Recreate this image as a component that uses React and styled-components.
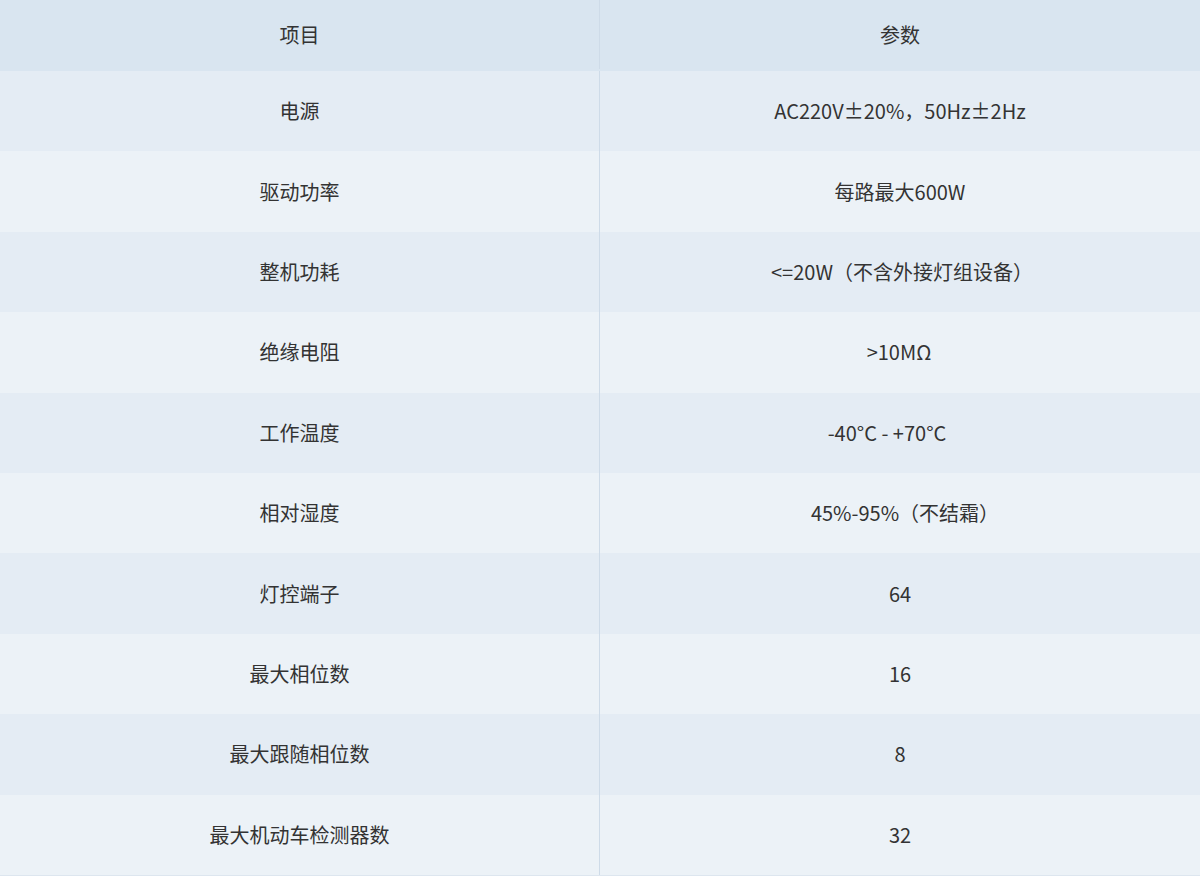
import React from 'react';
import styled, { createGlobalStyle } from 'styled-components';

const GlobalStyle = createGlobalStyle`
  html, body {
    margin: 0;
    padding: 0;
    background: #ffffff;
  }
  body {
    font-family: "Noto Sans CJK SC", "Noto Sans", sans-serif;
    color: #333333;
  }
`;

const Table = styled.div`
  width: 1200px;
  display: flex;
  flex-direction: column;
  border-bottom: 1px solid #dde6ef;
`;

const Row = styled.div`
  display: grid;
  grid-template-columns: 599px 1px 1fr;
  height: ${(p) => (p.$head ? '71px' : '80.4px')};
  padding-bottom: ${(p) => (p.$head ? '2px' : '0')};
  box-sizing: border-box;
  background-color: ${(p) =>
    p.$head ? '#d9e5f0' : p.$odd ? '#e4ecf4' : '#ecf2f7'};
`;

const Cell = styled.div`
  display: flex;
  align-items: center;
  justify-content: center;
  font-size: 20px;
  color: #333333;
  line-height: 1;
  margin-left: ${(p) => (p.$shift > 0 ? `${p.$shift * 2}px` : '0')};
  margin-right: ${(p) => (p.$shift < 0 ? `${-p.$shift * 2}px` : '0')};
`;

const Divider = styled.div`
  background-color: #cedbe8;
`;

const rows = [
  ['电源', 'AC220V±20%，50Hz±2Hz', 0],
  ['驱动功率', '每路最大600W', 0],
  ['整机功耗', '<=20W（不含外接灯组设备）', 2],
  ['绝缘电阻', '>10MΩ', -1],
  ['工作温度', '-40°C - +70°C', -13],
  ['相对湿度', '45%-95%（不结霜）', 5],
  ['灯控端子', '64', 0],
  ['最大相位数', '16', 0],
  ['最大跟随相位数', '8', 0],
  ['最大机动车检测器数', '32', 0],
];

export default function App() {
  return (
    <>
      <GlobalStyle />
      <Table>
        <Row $head>
          <Cell>项目</Cell>
          <Divider />
          <Cell>参数</Cell>
        </Row>
        {rows.map(([name, value, shift], i) => (
          <Row key={name} $odd={i % 2 === 0}>
            <Cell>{name}</Cell>
            <Divider />
            <Cell $shift={shift}>{value}</Cell>
          </Row>
        ))}
      </Table>
    </>
  );
}
